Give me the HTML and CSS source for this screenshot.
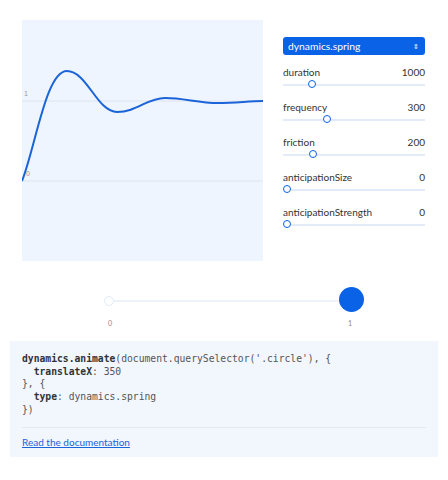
FILE: index.html
```html
<!DOCTYPE html>
<html lang="en">
<head>
    <meta charset="UTF-8">
    <meta name="viewport" content="width=device-width, initial-scale=1.0">
    <title>dynamics.spring</title>
    <link rel="stylesheet" href="styles.css">
</head>
<body>
    <div class="demo">
        <div class="chart">
            <svg width="241" height="241" viewBox="0 0 241 241">
                <line class="grid" x1="0" y1="81" x2="241" y2="81"/>
                <line class="grid" x1="0" y1="161" x2="241" y2="161"/>
                <text class="axis" x="2" y="76">1</text>
                <text class="axis" x="4" y="156">0</text>
                <path class="curve" d="M0,161 C14,125 24,51 45,51 C65,51 75,92 95,92 C115,92 125,78 143,78 C162,78 176,83 196,83 C215,83 226,81 241,81"/>
            </svg>
        </div>

        <div class="panel">
            <div class="select">
                <span>dynamics.spring</span>
                <span class="arrows">&#8661;</span>
            </div>

            <div class="param">
                <div class="param-head"><span>duration</span><span>1000</span></div>
                <div class="track"><span class="thumb" style="left: 29px"></span></div>
            </div>
            <div class="param">
                <div class="param-head"><span>frequency</span><span>300</span></div>
                <div class="track"><span class="thumb" style="left: 44px"></span></div>
            </div>
            <div class="param">
                <div class="param-head"><span>friction</span><span>200</span></div>
                <div class="track"><span class="thumb" style="left: 30px"></span></div>
            </div>
            <div class="param">
                <div class="param-head"><span>anticipationSize</span><span>0</span></div>
                <div class="track"><span class="thumb" style="left: 4px"></span></div>
            </div>
            <div class="param">
                <div class="param-head"><span>anticipationStrength</span><span>0</span></div>
                <div class="track"><span class="thumb" style="left: 4px"></span></div>
            </div>
        </div>
    </div>

    <div class="preview">
        <div class="preview-track">
            <span class="start-dot"></span>
            <span class="circle"></span>
        </div>
        <div class="preview-labels">
            <span>0</span>
            <span>1</span>
        </div>
    </div>

    <div class="code-box">
        <div class="code">
            <div><b>dynamics.animate</b>(document.querySelector('.circle'), {</div>
            <div class="indent"><b>translateX</b>: 350</div>
            <div>}, {</div>
            <div class="indent"><b>type</b>: dynamics.spring</div>
            <div>})</div>
        </div>
        <hr>
        <a href="#">Read the documentation</a>
    </div>
</body>
</html>
```

FILE: styles.css
```css
body {
    margin: 0;
    background: #fff;
    font-family: "Lato", "Noto Sans", sans-serif;
    color: #333;
}
.demo {
    display: flex;
    gap: 20px;
    padding: 20px 0 0 22px;
}
.chart {
    width: 241px;
    height: 241px;
    background: #eff5fe;
}
.chart svg {
    display: block;
}
.grid {
    stroke: #dde4ee;
    stroke-width: 1;
}
.axis {
    font-family: "Liberation Sans", sans-serif;
    font-size: 7px;
    fill: #999;
}
.curve {
    fill: none;
    stroke: #1a63d8;
    stroke-width: 2;
}
.panel {
    width: 142px;
    padding-top: 17px;
}
.select {
    display: flex;
    justify-content: space-between;
    align-items: center;
    height: 18px;
    margin-bottom: 10px;
    padding: 0 6px 0 5px;
    border-radius: 3px;
    background: #0a62e6;
    color: #fff;
    font-size: 10.3px;
}
.arrows {
    font-size: 7px;
}
.param {
    height: 35px;
}
.param-head {
    display: flex;
    justify-content: space-between;
    font-size: 10px;
    line-height: 14px;
}
.track {
    position: relative;
    height: 2px;
    margin-top: 5px;
    background: #e3ebf8;
}
.thumb {
    position: absolute;
    top: -4px;
    width: 6px;
    height: 6px;
    margin-left: -4px;
    border: 1.5px solid #0a62e6;
    border-radius: 50%;
    background: #fff;
}
.preview {
    width: 244px;
    margin: 39px 0 0 108px;
}
.preview-track {
    position: relative;
    height: 2px;
    background: #eef3fb;
}
.start-dot {
    position: absolute;
    left: -4px;
    top: -4px;
    width: 8px;
    height: 8px;
    border: 1px solid #e3ebf8;
    border-radius: 50%;
    background: #fff;
}
.circle {
    position: absolute;
    right: -12px;
    top: -13px;
    width: 25px;
    height: 25px;
    border-radius: 50%;
    background: #0a62e6;
}
.preview-labels {
    display: flex;
    justify-content: space-between;
    margin-top: 17px;
    font-size: 7px;
    color: #888;
}
.code-box {
    margin: 14px 10px 0;
    padding: 12px 12px 8px;
    background: #f2f6fd;
}
.code {
    font-family: "DejaVu Sans Mono", monospace;
    font-size: 9.7px;
    line-height: 12.7px;
    color: #555;
}
.code div {
    white-space: pre;
}
.code b {
    color: #333;
}
.indent {
    padding-left: 11.7px;
}
hr {
    margin: 10px 0 2px;
    border: 0;
    border-top: 1px solid #e3e9f2;
}
a {
    font-size: 10px;
    color: #1a63d8;
}
```
